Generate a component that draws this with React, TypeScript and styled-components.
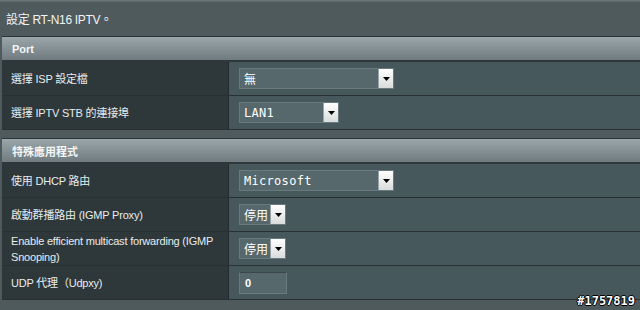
import styled, { createGlobalStyle } from 'styled-components';

const GlobalStyle = createGlobalStyle`
  html, body {
    margin: 0;
    padding: 0;
    background: #4f5a5d;
    overflow: hidden;
  }
  body {
    font-family: "Liberation Sans", Arial, "Noto Sans CJK TC", sans-serif;
    font-size: 12px;
    color: #ffffff;
  }
`;

type Field =
  | { kind: 'select'; value: string; width: number; mono?: boolean }
  | { kind: 'input'; value: string; width: number };

type Row = { label: string; field: Field };

const sections: { title: string; rows: Row[] }[] = [
  {
    title: 'Port',
    rows: [
      { label: '選擇 ISP 設定檔', field: { kind: 'select', value: '無', width: 155 } },
      { label: '選擇 IPTV STB 的連接埠', field: { kind: 'select', value: 'LAN1', width: 100, mono: true } },
    ],
  },
  {
    title: '特殊應用程式',
    rows: [
      { label: '使用 DHCP 路由', field: { kind: 'select', value: 'Microsoft', width: 155, mono: true } },
      { label: '啟動群播路由 (IGMP Proxy)', field: { kind: 'select', value: '停用', width: 47 } },
      {
        label: 'Enable efficient multicast forwarding (IGMP Snooping)',
        field: { kind: 'select', value: '停用', width: 47 },
      },
      { label: 'UDP 代理（Udpxy)', field: { kind: 'input', value: '0', width: 48 } },
    ],
  },
];

function App(): JSX.Element {
  return (
    <Page>
      <GlobalStyle />
      <TopLine />
      <Title>設定 RT-N16 IPTV。</Title>
      {sections.map((s) => (
        <Table key={s.title}>
          <Header>{s.title}</Header>
          {s.rows.map((r) => (
            <TableRow key={r.label}>
              <Label>{r.label}</Label>
              <Value>
                {r.field.kind === 'select' ? (
                  <Select $width={r.field.width}>
                    <SelectText $mono={r.field.mono}>{r.field.value}</SelectText>
                    <Arrow>
                      <svg width="7" height="4" viewBox="0 0 7 4">
                        <path d="M0 0H7L3.5 4Z" fill="#000" />
                      </svg>
                    </Arrow>
                  </Select>
                ) : (
                  <Input $width={r.field.width}>{r.field.value}</Input>
                )}
              </Value>
            </TableRow>
          ))}
        </Table>
      ))}
      <Footer>
        <ApplyButton />
      </Footer>
      <Watermark>#1757819</Watermark>
    </Page>
  );
}

export default App;

const Page = styled.div`
  position: relative;
  width: 640px;
  height: 310px;
  overflow: hidden;
  padding-left: 2px;
  box-sizing: border-box;
  display: flex;
  flex-direction: column;
  & > * {
    flex-shrink: 0;
  }
`;

const TopLine = styled.div`
  height: 2px;
  margin-left: -2px;
  background: linear-gradient(#6e797c, #596467);
`;

const Title = styled.div`
  height: 34px;
  padding-left: 4px;
  padding-bottom: 2px;
  box-sizing: border-box;
  display: flex;
  align-items: center;
  font-size: 12px;
  letter-spacing: -0.3px;
  color: #f2f4f4;
`;

const Table = styled.div`
  width: 660px;
  border-top: 1px solid #2b3336;
  margin-bottom: 8px;
  display: flex;
  flex-direction: column;
`;

const Header = styled.div`
  height: 23px;
  padding-left: 10px;
  display: flex;
  align-items: center;
  font-weight: bold;
  font-size: 11px;
  color: #f4f6f6;
  background: linear-gradient(#9aa6aa, #6f7b7f);
  border-bottom: 2px solid #2e373a;
`;

const TableRow = styled.div`
  display: grid;
  grid-template-columns: 227px 1fr;
  min-height: 33px;
  border-bottom: 1px solid #283033;
`;

const Label = styled.div`
  background: #2e383b;
  border-right: 1px solid #222a2c;
  padding: 0 6px 0 9px;
  display: flex;
  align-items: center;
  font-size: 11px;
  letter-spacing: -0.2px;
  line-height: 16px;
  color: #e8ecec;
`;

const Value = styled.div`
  background: #47585d;
  padding-left: 10px;
  display: flex;
  align-items: center;
`;

const Select = styled.div<{ $width: number }>`
  width: ${({ $width }) => $width}px;
  height: 21px;
  box-sizing: border-box;
  border: 1px solid #687a7e;
  background: #56686c;
  display: flex;
  align-items: stretch;
`;

const SelectText = styled.span<{ $mono?: boolean }>`
  flex: 1;
  display: flex;
  align-items: center;
  padding-left: 4px;
  color: #ffffff;
  font-family: ${({ $mono }) =>
    $mono ? '"DejaVu Sans Mono", "Liberation Mono", monospace' : '"Liberation Sans", "Noto Sans CJK TC", sans-serif'};
  font-size: 12px;
  letter-spacing: ${({ $mono }) => ($mono ? '0.3px' : '0')};
`;

const Arrow = styled.span`
  width: 14px;
  background: linear-gradient(#ffffff, #d9dcdc);
  border-left: 1px solid #9aa4a6;
  display: flex;
  align-items: center;
  justify-content: center;
`;

const Input = styled.div<{ $width: number }>`
  width: ${({ $width }) => $width}px;
  height: 22px;
  box-sizing: border-box;
  border: 1px solid #687a7e;
  border-top-color: #3b474a;
  background: #56686c;
  padding-left: 5px;
  display: flex;
  align-items: center;
  font-size: 11px;
  font-weight: bold;
  color: #ffffff;
`;

const Footer = styled.div`
  display: flex;
  justify-content: center;
  align-items: flex-start;
`;

const ApplyButton = styled.div`
  width: 96px;
  height: 14px;
  margin-left: 10px;
  margin-top: 8px;
  border-radius: 6px 6px 0 0;
  background: #2a3134;
  border-top: 1px solid #7c878a;
`;

const Watermark = styled.div`
  position: absolute;
  right: 5px;
  bottom: 2px;
  font-family: "DejaVu Sans Mono", "Liberation Mono", monospace;
  font-size: 12px;
  font-weight: bold;
  color: #ffffff;
  text-shadow: -1px 0 #000, 1px 0 #000, 0 -1px #000, 0 1px #000;
`;
